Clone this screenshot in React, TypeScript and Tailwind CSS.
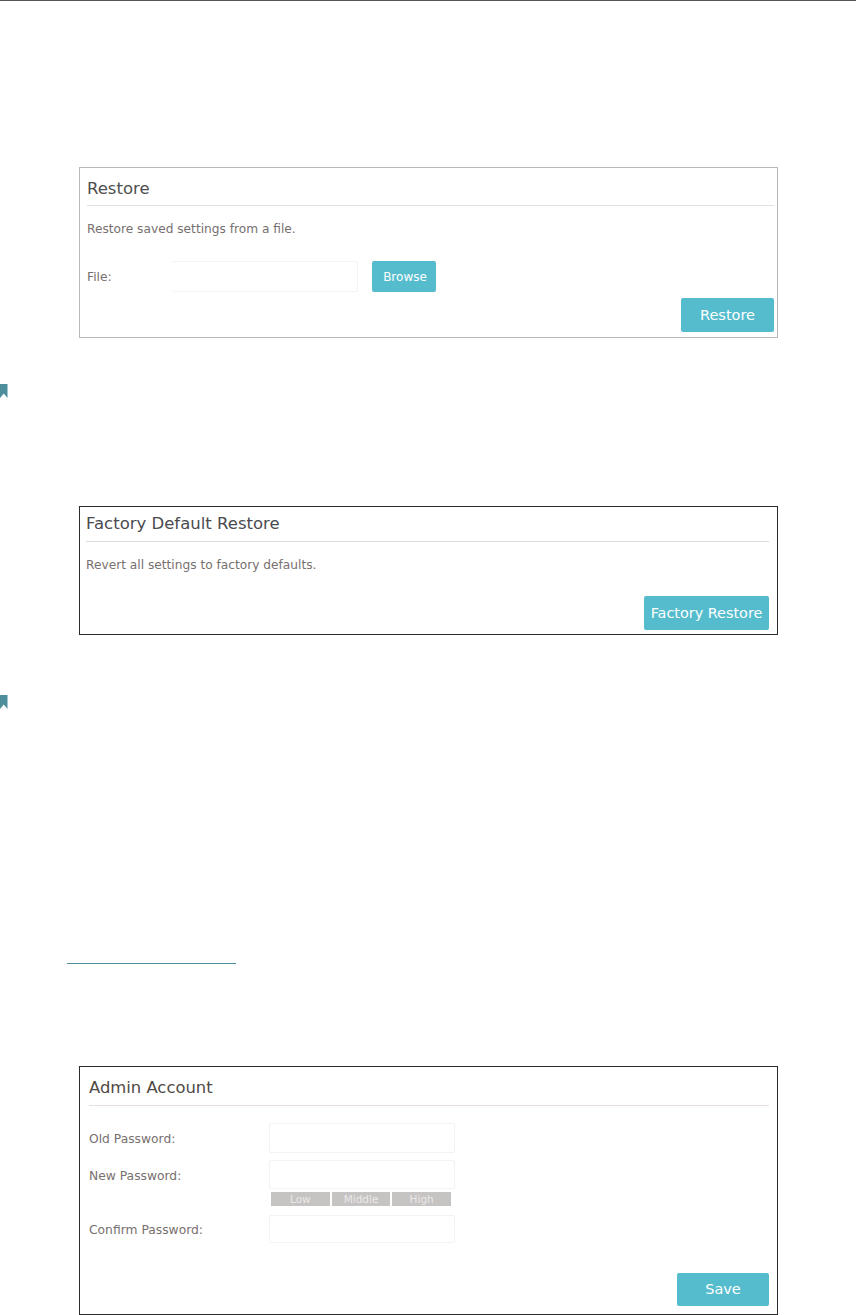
const font = "font-['DejaVu_Sans',sans-serif]";

function Bookmark() {
  return (
    <svg width="8" height="14" viewBox="0 0 8 14" className="block">
      <path d="M0 0H7.5V14L3.75 9.5L0 14Z" fill="#4e8d9b" />
    </svg>
  );
}

function Field({ className }: { className: string }) {
  return <div className={`w-[186px] rounded-[2px] border border-[#f6f2f1] bg-white ${className}`} />;
}

function TealButton({ label, className }: { label: string; className: string }) {
  return (
    <div className={`flex items-center justify-center rounded-[2px] bg-[#54bccd] text-white ${className}`}>
      {label}
    </div>
  );
}

export default function App() {
  return (
    <div className={`w-[856px] h-[1315px] overflow-hidden bg-white ${font}`}>
      <div className="h-px bg-[#555555]" />

      {/* restore from file */}
      <div className="ml-[79px] mt-[166px] h-[171px] w-[699px] border border-[#b9b9b9] pl-[7px] pr-[3px]">
        <h2 className="h-[37px] pt-[11px] text-[16.5px] leading-[20px] text-[#4f4f4f]">Restore</h2>
        <div className="h-px bg-[#e6dfdd]" />
        <p className="mt-[15px] text-[12.2px] leading-[16px] text-[#77706f]">Restore saved settings from a file.</p>
        <div className="mt-[24px] flex items-center">
          <span className="w-[85px] pt-[1px] text-[12.3px] leading-[16px] text-[#77706f]">File:</span>
          <Field className="h-[31px] border-l-0" />
          <TealButton label="Browse" className="ml-[14px] h-[31px] w-[64px] pl-[2px] text-[12px]" />
        </div>
        <div className="mt-[6px] flex justify-end">
          <TealButton label="Restore" className="h-[34px] w-[93px] pt-[2px] text-[14.5px]" />
        </div>
      </div>

      <div className="mt-[46px]"><Bookmark /></div>

      {/* factory default */}
      <div className="ml-[79px] mt-[108px] h-[129px] w-[699px] border border-[#2b2b2b] pl-[6px] pr-[8px]">
        <h2 className="h-[34px] pt-[7px] text-[16.5px] leading-[20px] text-[#4a4a4f]">Factory Default Restore</h2>
        <div className="h-px bg-[#e0dad8]" />
        <p className="mt-[15px] text-[12.2px] leading-[16px] text-[#77706f]">Revert all settings to factory defaults.</p>
        <div className="mt-[23px] flex justify-end">
          <TealButton label="Factory Restore" className="h-[34px] w-[125px] pt-[2px] text-[14.4px]" />
        </div>
      </div>

      <div className="mt-[60px]"><Bookmark /></div>

      <div className="ml-[67px] mt-[254px] h-px w-[169px] bg-[#4e8d9b]" />

      {/* admin account */}
      <div className="ml-[79px] mt-[102px] h-[249px] w-[699px] border border-[#2b2b2b] pl-[9px] pr-[8px]">
        <h2 className="h-[38px] pt-[11px] text-[16.4px] leading-[20px] text-[#4f4a45]">Admin Account</h2>
        <div className="h-px bg-[#e6dfdd]" />
        <div className="mt-[17px] flex items-center">
          <span className="w-[180px] pt-[2px] text-[12.3px] leading-[16px] text-[#77706f]">Old Password:</span>
          <Field className="h-[30px]" />
        </div>
        <div className="mt-[7px] flex items-center">
          <span className="w-[180px] pt-[2px] text-[12.3px] leading-[16px] text-[#77706f]">New Password:</span>
          <Field className="h-[29px]" />
        </div>
        <div className="ml-[182px] mt-[3px] flex w-[180px] gap-[2px] text-center text-[10.5px] leading-[14px] text-[#ece9e9]">
          <div className="flex-1 bg-[#c6c3c3]">Low</div>
          <div className="flex-1 bg-[#c6c3c3]">Middle</div>
          <div className="flex-1 bg-[#c6c3c3]">High</div>
        </div>
        <div className="mt-[9px] flex items-center">
          <span className="w-[180px] pt-[2px] text-[12.3px] leading-[16px] text-[#77706f]">Confirm Password:</span>
          <Field className="h-[28px]" />
        </div>
        <div className="mt-[30px] flex justify-end">
          <TealButton label="Save" className="h-[33px] w-[92px] text-[14.5px]" />
        </div>
      </div>
    </div>
  );
}
